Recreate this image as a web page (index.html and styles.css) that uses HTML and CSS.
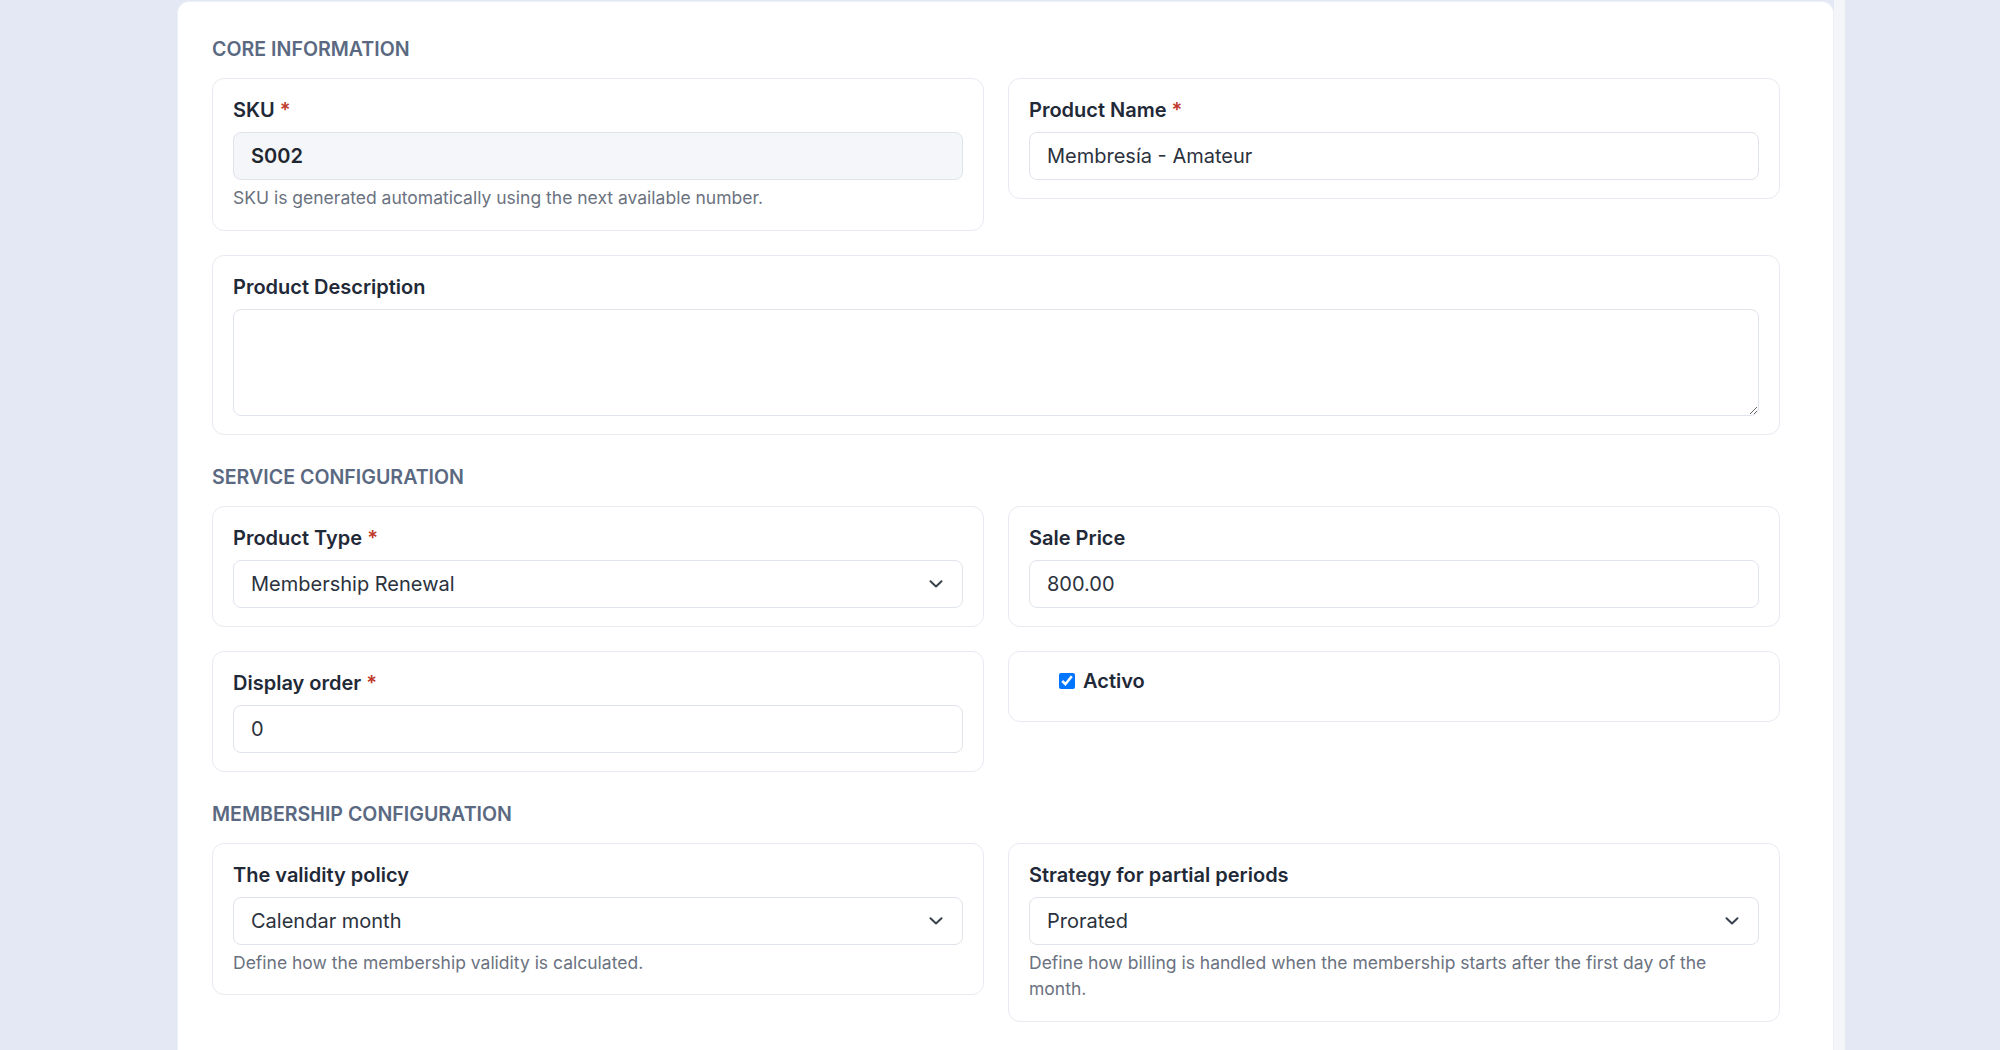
FILE: index.html
```html
<!DOCTYPE html>
<html lang="en">
<head>
    <meta charset="UTF-8">
    <meta name="viewport" content="width=device-width, initial-scale=1.0">
    <title>Edit Product</title>
    <link rel="stylesheet" href="styles.css">
</head>
<body>

<div class="shell">
    <div class="panel">
        <form class="product-form">

            <!-- Core information -->
            <section class="form-section">
                <h2 class="section-title">Core Information</h2>
                <div class="grid">
                    <div class="card">
                        <label for="sku">SKU <span class="req">*</span></label>
                        <input id="sku" class="field field-readonly" type="text" value="S002" readonly>
                        <p class="help">SKU is generated automatically using the next available number.</p>
                    </div>
                    <div class="card">
                        <label for="name">Product Name <span class="req">*</span></label>
                        <input id="name" class="field" type="text" value="Membresía - Amateur">
                    </div>
                    <div class="card card-wide">
                        <label for="description">Product Description</label>
                        <textarea id="description" class="field field-area"></textarea>
                    </div>
                </div>
            </section>

            <!-- Service configuration -->
            <section class="form-section">
                <h2 class="section-title">Service Configuration</h2>
                <div class="grid">
                    <div class="card">
                        <label for="type">Product Type <span class="req">*</span></label>
                        <div class="select-wrap">
                            <select id="type" class="field">
                                <option>Membership Renewal</option>
                            </select>
                            <svg class="chevron" width="14" height="8" viewBox="0 0 14 8"><path d="M1.5 1.2 7 6.5 12.5 1.2" fill="none" stroke="#3a4250" stroke-width="2" stroke-linecap="round" stroke-linejoin="round"/></svg>
                        </div>
                    </div>
                    <div class="card">
                        <label for="price">Sale Price</label>
                        <input id="price" class="field" type="text" value="800.00">
                    </div>
                    <div class="card">
                        <label for="order">Display order <span class="req">*</span></label>
                        <input id="order" class="field" type="text" value="0">
                    </div>
                    <div class="card card-check">
                        <label class="check-label" for="active">
                            <input id="active" type="checkbox" checked>
                            <span>Activo</span>
                        </label>
                    </div>
                </div>
            </section>

            <!-- Membership configuration -->
            <section class="form-section">
                <h2 class="section-title">Membership Configuration</h2>
                <div class="grid">
                    <div class="card">
                        <label for="validity">The validity policy</label>
                        <div class="select-wrap">
                            <select id="validity" class="field">
                                <option>Calendar month</option>
                            </select>
                            <svg class="chevron" width="14" height="8" viewBox="0 0 14 8"><path d="M1.5 1.2 7 6.5 12.5 1.2" fill="none" stroke="#3a4250" stroke-width="2" stroke-linecap="round" stroke-linejoin="round"/></svg>
                        </div>
                        <p class="help">Define how the membership validity is calculated.</p>
                    </div>
                    <div class="card">
                        <label for="partial">Strategy for partial periods</label>
                        <div class="select-wrap">
                            <select id="partial" class="field">
                                <option>Prorated</option>
                            </select>
                            <svg class="chevron" width="14" height="8" viewBox="0 0 14 8"><path d="M1.5 1.2 7 6.5 12.5 1.2" fill="none" stroke="#3a4250" stroke-width="2" stroke-linecap="round" stroke-linejoin="round"/></svg>
                        </div>
                        <p class="help">Define how billing is handled when the membership starts after the first day of the month.</p>
                    </div>
                </div>
            </section>

        </form>
    </div>
    <div class="track"></div>
</div>

</body>
</html>
```

FILE: styles.css
```css
html, body {
    height: 100%;
}
body {
    margin: 0;
    background: #e3e8f4;
    font-family: Inter, "Noto Sans", sans-serif;
    color: #1f2937;
    overflow: hidden;
}
.shell {
    display: flex;
    margin-left: 177px;
    width: 1668px;
    height: 1050px;
}
.panel {
    width: 1657px;
    box-sizing: border-box;
    margin-top: 1px;
    padding: 34px 0 40px 34px;
    background: #ffffff;
    border: 1px solid #eceff5;
    border-bottom: none;
    border-radius: 12px 12px 0 0;
}
.track {
    width: 11px;
    background: #f3f5f9;
}
.product-form {
    width: 1568px;
}
.form-section + .form-section {
    margin-top: 29px;
}
.section-title {
    margin: 0 0 16px;
    font-size: 19.6px;
    line-height: 26px;
    font-weight: 600;
    text-transform: uppercase;
    color: #5a6981;
}
.grid {
    display: grid;
    grid-template-columns: 1fr 1fr;
    gap: 24px 24px;
    align-items: start;
}
.card {
    padding: 18px 20px;
    background: #ffffff;
    border: 1px solid #e7eaf1;
    border-radius: 12px;
}
.card-wide {
    grid-column: 1 / -1;
}
.card label {
    display: block;
    font-size: 20px;
    line-height: 26px;
    font-weight: 600;
    color: #1f2937;
}
.req {
    color: #c0392b;
}
.field {
    display: block;
    width: 100%;
    height: 48px;
    box-sizing: border-box;
    margin-top: 9px;
    padding: 0 17px;
    font-family: Inter, "Noto Sans", sans-serif;
    font-size: 20px;
    color: #2b323d;
    background: #ffffff;
    border: 1px solid #dfe3ea;
    border-radius: 8px;
    outline: none;
}
.field-readonly {
    background: #f4f6f9;
    font-weight: 600;
    color: #1f2630;
}
.field-area {
    height: 107px;
    padding: 12px 17px;
    resize: vertical;
}
select.field {
    appearance: none;
    -webkit-appearance: none;
}
.select-wrap {
    position: relative;
}
.chevron {
    position: absolute;
    right: 20px;
    top: 20px;
    pointer-events: none;
}
.help {
    margin: 5px 0 0;
    font-size: 17.5px;
    line-height: 26.5px;
    color: #6b7280;
}
.card-check {
    padding: 16px 20px 27px;
}
.card .check-label {
    display: flex;
    align-items: center;
    gap: 8px;
    padding-left: 30px;
    font-size: 20px;
    font-weight: 600;
    color: #1f2937;
}
.check-label input {
    width: 16px;
    height: 16px;
    margin: 0;
}
```
